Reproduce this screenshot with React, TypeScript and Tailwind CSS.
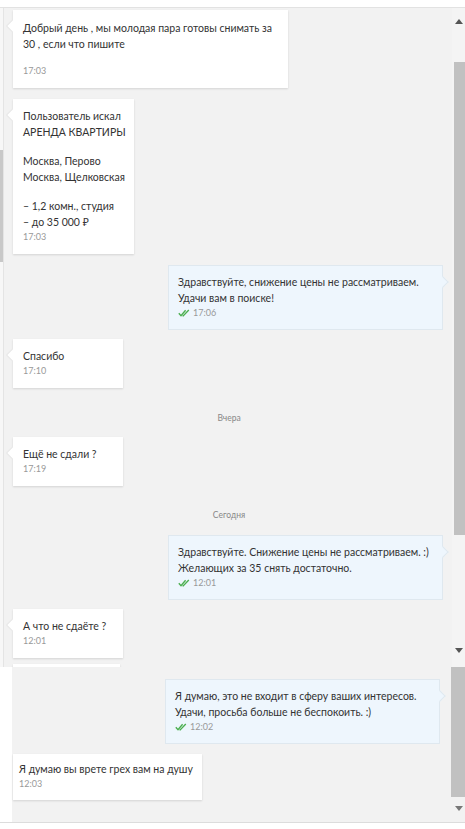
import React from "react";

const font = { fontFamily: "Lato, 'Noto Sans', 'DejaVu Sans', sans-serif" };

function Check() {
  return (
    <svg width="12" height="8" viewBox="0 0 12 8" className="mr-[3px] inline-block">
      <path d="M0.8 4.2 L3 6.6 L7.6 1.2" fill="none" stroke="#4caf50" strokeWidth="1.4" />
      <path d="M4.6 6.4 L5.2 6.9 L10.8 1" fill="none" stroke="#4caf50" strokeWidth="1.4" />
    </svg>
  );
}

function InBubble({
  children,
  time,
  className = "",
}: {
  children: React.ReactNode;
  time: string;
  className?: string;
}) {
  return (
    <div
      className={
        "relative bg-white pt-[9px] pb-[10px] pl-[10px] pr-[6px] shadow-[0_1px_2px_rgba(0,0,0,0.13)] " +
        className
      }
    >
      <div className="absolute left-[-4px] top-[12px] h-[8px] w-[8px] rotate-45 bg-white shadow-[-1px_1px_1px_rgba(0,0,0,0.05)]" />
      <div className="relative whitespace-nowrap text-[10.5px] leading-[16px] text-[#333]">{children}</div>
      <div className="relative text-[9px] leading-[14px] text-[#999]">{time}</div>
    </div>
  );
}

function OutBubble({ lines, time }: { lines: string[]; time: string }) {
  return (
    <div className="relative w-[275px] self-end border border-[#dfe8ef] bg-[#eef6fd] pt-[8px] pb-[9px] pl-[9px] pr-[6px]">
      <div className="absolute right-[-5px] top-[12px] h-[8px] w-[8px] rotate-45 border-r border-t border-[#dfe8ef] bg-[#eef6fd]" />
      <div className="relative whitespace-nowrap text-[10.5px] leading-[16px] text-[#333]">
        {lines.map((l, i) => (
          <div key={i}>{l}</div>
        ))}
      </div>
      <div className="relative flex items-center text-[9px] leading-[14px] text-[#999]">
        <Check />
        {time}
      </div>
    </div>
  );
}

function DateLabel({ text, className = "" }: { text: string; className?: string }) {
  return (
    <div className={"flex justify-center text-[8.5px] leading-[14px] text-[#888] " + className}>
      <span className="ml-[2px]">{text}</span>
    </div>
  );
}

function ScrollTop() {
  return (
    <div className="relative w-[13px] bg-[#f4f4f4]">
      <div className="absolute left-[3px] top-[11px] h-0 w-0 border-b-[5px] border-l-[4px] border-r-[4px] border-b-[#555] border-l-transparent border-r-transparent" />
      <div className="absolute left-[2px] right-0 top-[54px] h-[473px] bg-[#c1c1c1]" />
      <div className="absolute left-[3px] top-[640px] h-0 w-0 border-t-[5px] border-l-[4px] border-r-[4px] border-t-[#555] border-l-transparent border-r-transparent" />
    </div>
  );
}

export default function App() {
  return (
    <div className="flex h-[829px] w-[465px] flex-col overflow-hidden bg-white" style={font}>
      {/* top pane */}
      <div className="flex h-[667px] shrink-0 flex-col bg-[#f2f2f2]">
        <div className="h-[8px] shrink-0 border-b border-[#e2e2e2] bg-white" />
        <div className="flex min-h-0 flex-1">
          <div className="flex w-[4px] shrink-0 flex-col border-r border-[#e4e4e4] bg-[#f7f7f7]">
            <div className="h-[142px]" />
            <div className="h-[112px] bg-[#c8c8c8]" />
          </div>
          <div className="flex min-w-0 flex-1 flex-col overflow-hidden pl-[9px] pr-[9px] pt-[2px]">
            <InBubble time="17:03" className="w-[275px]">
              <div className="pt-[1px]">Добрый день , мы молодая пара готовы снимать за</div>
              <div>30 , если что пишите</div>
              <div className="h-[12px]" />
            </InBubble>
            <InBubble time="17:03" className="mt-[11px] w-[121px]">
              <div>Пользователь искал</div>
              <div>АРЕНДА КВАРТИРЫ</div>
              <div className="h-[13px]" />
              <div>Москва, Перово</div>
              <div>Москва, Щелковская</div>
              <div className="h-[13px]" />
              <div>– 1,2 комн., студия</div>
              <div>– до 35 000 ₽</div>
            </InBubble>
            <div className="mt-[11px] flex flex-col">
              <OutBubble
                lines={["Здравствуйте, снижение цены не рассматриваем.", "Удачи вам в поиске!"]}
                time="17:06"
              />
            </div>
            <InBubble time="17:10" className="mt-[9px] w-[110px]">
              <div>Спасибо</div>
            </InBubble>
            <DateLabel text="Вчера" className="mt-[23px]" />
            <InBubble time="17:19" className="mt-[12px] w-[110px]">
              <div>Ещё не сдали ?</div>
            </InBubble>
            <DateLabel text="Сегодня" className="mt-[22px]" />
            <div className="mt-[13px] flex flex-col">
              <OutBubble
                lines={[
                  "Здравствуйте. Снижение цены не рассматриваем. :)",
                  "Желающих за 35 снять достаточно.",
                ]}
                time="12:01"
              />
            </div>
            <InBubble time="12:01" className="mt-[9px] w-[110px]">
              <div>А что не сдаёте ?</div>
            </InBubble>
            <div className="mt-[6px] h-[20px] w-[107px] shrink-0 bg-white shadow-[0_1px_2px_rgba(0,0,0,0.13)]" />
          </div>
          <ScrollTop />
        </div>
      </div>
      {/* bottom pane */}
      <div className="flex h-[155px] shrink-0">
        <div className="w-[12px] shrink-0 bg-white" />
        <div className="flex flex-1 bg-[#f2f2f2]">
          <div className="flex min-w-0 flex-1 flex-col pl-[1px] pr-[11px] pt-[12px]">
            <OutBubble
              lines={[
                "Я думаю, это не входит в сферу ваших интересов.",
                "Удачи, просьба больше не беспокоить. :)",
              ]}
              time="12:02"
            />
            <div className="mt-[10px] w-[189px] bg-white pb-[9px] pl-[6px] pt-[7px] shadow-[0_1px_2px_rgba(0,0,0,0.13)]">
              <div className="whitespace-nowrap text-[10.5px] leading-[16px] text-[#333]">Я думаю вы врете грех вам на душу</div>
              <div className="text-[9px] leading-[14px] text-[#999]">12:03</div>
            </div>
          </div>
          <div className="relative w-[14px] shrink-0 bg-[#f2f2f2]">
            <div className="absolute left-0 right-0 top-0 h-[130px] bg-[#c1c1c1]" />
            <div className="absolute left-[4px] top-[139px] h-0 w-0 border-t-[5px] border-l-[4px] border-r-[4px] border-t-[#777] border-l-transparent border-r-transparent" />
          </div>
        </div>
      </div>
      <div className="h-[7px] shrink-0 border-t border-[#dcdcdc] bg-white" />
    </div>
  );
}
